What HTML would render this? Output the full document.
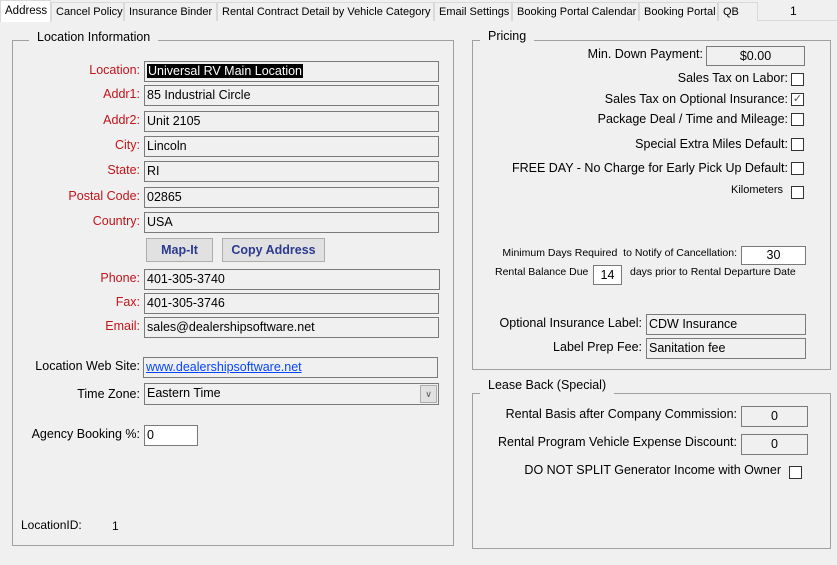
<!DOCTYPE html><html><head><style>
body{margin:0;width:837px;height:565px;background:#f0f0f0;font-family:"Liberation Sans",sans-serif;font-size:12px;position:relative;overflow:hidden;color:#000}
div,span{position:absolute;box-sizing:border-box;white-space:nowrap}
.tab{top:2px;height:19px;border:1px solid #d9d9d9;border-bottom:none;background:#f0f0f0;padding:3px 0 0 4px;font-size:11px}
.g{border:1px solid #a0a0a0}
.gt{background:#f0f0f0;font-size:12.5px;padding:1px 8px;height:21px}
.r{color:#c0141c;text-align:right}
.k{text-align:right}
.f{border:1px solid #7a7a7a;background:#f0f0f0;height:21px;padding:2px 2px;font-size:12.5px}
.w{background:#fff}
.cb{width:13px;height:13px;border:1px solid #333;background:#fff}
.btn{background:#e1e1e1;border:1px solid #adadad;color:#2b3990;font-weight:bold;text-align:center;padding-top:4px;height:24px;font-size:12.5px}
</style></head><body>
<div style="left:0;top:20px;width:837px;height:1px;background:#d9d9d9"></div>
<div class="tab" style="left:0;width:51px;top:0;height:22px;background:#fff;font-size:11.5px;padding-top:4px">Address</div>
<div class="tab" style="left:51px;width:73px">Cancel Policy</div>
<div class="tab" style="left:124px;width:93px">Insurance Binder</div>
<div class="tab" style="left:217px;width:217px">Rental Contract Detail by Vehicle Category</div>
<div class="tab" style="left:434px;width:78px">Email Settings</div>
<div class="tab" style="left:512px;width:127px">Booking Portal Calendar</div>
<div class="tab" style="left:639px;width:79px">Booking Portal</div>
<div class="tab" style="left:718px;width:40px">QB</div>
<div style="left:790px;top:4px">1</div>

<div class="g" style="left:12px;top:40px;width:442px;height:506px"></div>
<div class="gt" style="left:29px;top:29px">Location Information</div>
<div class="r" style="right:697px;top:63px;font-size:12.5px">Location:</div>
<div class="f" style="left:144px;top:61px;width:295px"><span style="position:static;background:#000;color:#fff;padding:0 1px">Universal RV Main Location</span></div>
<div class="r" style="right:697px;top:87px;font-size:12.5px">Addr1:</div><div class="f" style="left:144px;top:85px;width:295px">85 Industrial Circle</div>
<div class="r" style="right:697px;top:113px;font-size:12.5px">Addr2:</div><div class="f" style="left:144px;top:111px;width:295px">Unit 2105</div>
<div class="r" style="right:697px;top:138px;font-size:12.5px">City:</div><div class="f" style="left:144px;top:136px;width:295px">Lincoln</div>
<div class="r" style="right:697px;top:163px;font-size:12.5px">State:</div><div class="f" style="left:144px;top:161px;width:295px">RI</div>
<div class="r" style="right:697px;top:189px;font-size:12.5px">Postal Code:</div><div class="f" style="left:144px;top:187px;width:295px">02865</div>
<div class="r" style="right:697px;top:214px;font-size:12.5px">Country:</div><div class="f" style="left:144px;top:212px;width:295px">USA</div>
<div class="btn" style="left:146px;top:238px;width:67px">Map-It</div>
<div class="btn" style="left:222px;top:238px;width:103px">Copy Address</div>
<div class="r" style="right:697px;top:271px;font-size:12.5px">Phone:</div><div class="f" style="left:144px;top:269px;width:296px">401-305-3740</div>
<div class="r" style="right:697px;top:295px;font-size:12.5px">Fax:</div><div class="f" style="left:144px;top:293px;width:295px">401-305-3746</div>
<div class="r" style="right:697px;top:319px;font-size:12.5px">Email:</div><div class="f" style="left:144px;top:317px;width:295px">sales@dealershipsoftware.net</div>
<div class="k" style="right:697px;top:359px;font-size:12.5px">Location Web Site:</div><div class="f" style="left:143px;top:357px;width:295px;color:#0645ff;text-decoration:underline">www.dealershipsoftware.net</div>
<div class="k" style="right:697px;top:387px;font-size:12.5px">Time Zone:</div><div class="f" style="left:144px;top:383px;width:295px;height:22px">Eastern Time<div style="right:1px;top:1px;width:17px;height:18px;background:#e1e1e1;border:1px solid #adadad;text-align:center;font-size:9px;color:#555;padding-top:3px">&#8744;</div></div>
<div class="k" style="right:697px;top:427px;font-size:12.5px">Agency Booking %:</div><div class="f w" style="left:144px;top:425px;width:54px">0</div>
<div style="left:21px;top:518px">LocationID:</div><div style="left:112px;top:519px">1</div>

<div class="g" style="left:472px;top:40px;width:359px;height:330px"></div>
<div class="gt" style="left:480px;top:28px">Pricing</div>
<div class="k" style="right:134px;top:47px;font-size:12.5px">Min. Down Payment:</div>
<div class="f" style="left:706px;top:46px;width:99px;height:20px;text-align:center">$0.00</div>
<div class="k" style="right:49px;top:71px;font-size:12.5px">Sales Tax on Labor:</div><div class="cb" style="left:791px;top:73px"></div>
<div class="k" style="right:49px;top:92px;font-size:12.5px">Sales Tax on Optional Insurance:</div><div class="cb" style="left:791px;top:93px;color:#555;font-size:11px;line-height:11px;text-align:center">&#10003;</div>
<div class="k" style="right:49px;top:112px;font-size:12.5px">Package Deal / Time and Mileage:</div><div class="cb" style="left:791px;top:113px"></div>
<div class="k" style="right:49px;top:137px;font-size:12.5px">Special Extra Miles Default:</div><div class="cb" style="left:791px;top:138px"></div>
<div class="k" style="right:49px;top:161px;font-size:12.5px">FREE DAY - No Charge for Early Pick Up Default:</div><div class="cb" style="left:791px;top:162px"></div>
<div class="k" style="right:54px;top:184px;font-size:11px">Kilometers</div><div class="cb" style="left:791px;top:186px"></div>
<div class="k" style="right:100px;top:247px;font-size:10.5px">Minimum Days Required&nbsp; to Notify of Cancellation:</div>
<div class="f w" style="left:741px;top:246px;width:65px;height:19px;text-align:center;padding-top:1px">30</div>
<div style="left:495px;top:266px;font-size:10.5px">Rental Balance Due</div>
<div class="f w" style="left:593px;top:265px;width:29px;height:20px;text-align:center;padding-top:2px">14</div>
<div style="left:630px;top:266px;font-size:10.5px">days prior to Rental Departure Date</div>
<div class="k" style="right:195px;top:316px;font-size:12.5px">Optional Insurance Label:</div><div class="f" style="left:646px;top:314px;width:160px">CDW Insurance</div>
<div class="k" style="right:195px;top:340px;font-size:12.5px">Label Prep Fee:</div><div class="f" style="left:646px;top:338px;width:160px">Sanitation fee</div>

<div class="g" style="left:472px;top:393px;width:359px;height:156px"></div>
<div class="gt" style="left:480px;top:377px">Lease Back (Special)</div>
<div class="k" style="right:100px;top:407px;font-size:12.5px">Rental Basis after Company Commission:</div><div class="f" style="left:741px;top:406px;width:67px;text-align:center">0</div>
<div class="k" style="right:100px;top:435px;font-size:12.5px">Rental Program Vehicle Expense Discount:</div><div class="f" style="left:741px;top:434px;width:67px;text-align:center">0</div>
<div class="k" style="right:56px;top:463px;font-size:12.5px">DO NOT SPLIT Generator Income with Owner</div><div class="cb" style="left:789px;top:466px"></div>
</body></html>
